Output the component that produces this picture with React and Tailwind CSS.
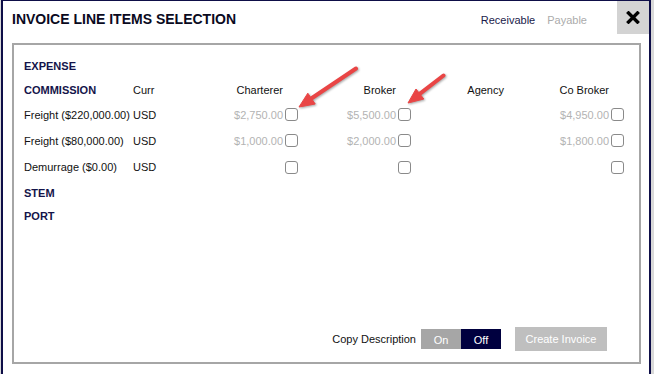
import React from "react";

const font = { fontFamily: '"Liberation Sans", Arial, sans-serif' };

function Box() {
  return <span className="inline-block w-[13px] h-[13px] shrink-0 mb-[1px] rounded-[3px] border border-[#8a8a8a] bg-white" />;
}

function Money({ v, box = true }) {
  return (
    <div className="flex items-center justify-end pr-[2px]">
      {v && <span className="text-[#b3b3b3] mr-[2px]">{v}</span>}
      {box && <Box />}
    </div>
  );
}

const cols = "grid grid-cols-[109px_52px_115px_113px_108px_105px]";

export default function App() {
  const rows = [
    ["Freight ($220,000.00)", "$2,750.00", "$5,500.00", "$4,950.00", "h-[26px]"],
    ["Freight ($80,000.00)", "$1,000.00", "$2,000.00", "$1,800.00", "h-[26px]"],
    ["Demurrage ($0.00)", "", "", "", "h-[27px]"],
  ];
  return (
    <div className="relative w-[654px] h-[374px] overflow-hidden bg-[#d9d9d9]" style={font}>
      <div className="ml-[1px] w-[650px] h-[380px] bg-white border-l-2 border-r-2 border-t border-[#0e0e48] flex flex-col">
        <div className="flex items-start h-[33px]">
          <div className="pl-[9px] pt-[10px] text-[14px] font-bold text-[#0a0a1e] leading-[16px]">
            INVOICE LINE ITEMS SELECTION
          </div>
          <div className="ml-auto pt-[12px] flex gap-[12px] text-[11px] leading-[14px] pr-[30px]">
            <span className="text-[#1a1a4a]">Receivable</span>
            <span className="text-[#ababab]">Payable</span>
          </div>
          <div className="w-[32px] h-[33px] bg-[#d3d3d3] flex items-center justify-center">
            <svg width="14" height="13" viewBox="0 0 14 13">
              <path d="M2.5 2 L11.5 11 M11.5 2 L2.5 11" stroke="#000" strokeWidth="3.4" strokeLinecap="square" />
            </svg>
          </div>
        </div>
        <div className="ml-[9px] mt-[9px] w-[629px] h-[321px] border-2 border-[#a6a6a6] flex flex-col text-[11px] text-[#111]">
          <div className="pl-[10px] pt-[9px]">
            <div className="h-[24px] flex items-center font-bold text-[#14144a]">EXPENSE</div>
            <div className={`${cols} h-[24px] items-center`}>
              <div className="font-bold text-[#14144a]">COMMISSION</div>
              <div>Curr</div>
              <div className="text-right pr-[17px]">Charterer</div>
              <div className="text-right pr-[17px]">Broker</div>
              <div className="text-right pr-[17px]">Agency</div>
              <div className="text-right pr-[17px]">Co Broker</div>
            </div>
            {rows.map(([label, a, b, c, h]) => (
              <div key={label} className={`${cols} ${h} items-center`}>
                <div>{label}</div>
                <div>USD</div>
                <Money v={a} />
                <Money v={b} />
                <div />
                <Money v={c} />
              </div>
            ))}
            <div className="h-[24px] flex items-center font-bold text-[#14144a]">STEM</div>
            <div className="h-[22px] flex items-center font-bold text-[#14144a]">PORT</div>
          </div>
          <div className="mt-auto pb-[11px] pr-[32px] flex items-center justify-end">
            <span className="text-[#111] mr-[5px]">Copy Description</span>
            <div className="flex h-[20px]">
              <div className="w-[40px] bg-[#a6a6a6] text-white flex items-center justify-center pt-[2px]">On</div>
              <div className="w-[40px] bg-[#00003f] text-white flex items-center justify-center pt-[2px]">Off</div>
            </div>
            <div className="ml-[14px] w-[92px] h-[24px] bg-[#bfbfbf] text-white flex items-center justify-center">
              Create Invoice
            </div>
          </div>
        </div>
      </div>
      <svg className="absolute left-0 top-0 drop-shadow-[1px_1px_1px_rgba(0,0,0,0.35)]" width="654" height="374" viewBox="0 0 654 374">
        <g fill="#e94545" stroke="#e94545">
          <line x1="356" y1="68.5" x2="312" y2="98" strokeWidth="4" strokeLinecap="round" />
          <polygon points="299,107 315.2,104 307.8,93.2" strokeWidth="1" strokeLinejoin="round" />
          <line x1="443.5" y1="75.5" x2="420" y2="93.7" strokeWidth="4" strokeLinecap="round" />
          <polygon points="408,103 423.8,99 416,89" strokeWidth="1" strokeLinejoin="round" />
        </g>
      </svg>
    </div>
  );
}
